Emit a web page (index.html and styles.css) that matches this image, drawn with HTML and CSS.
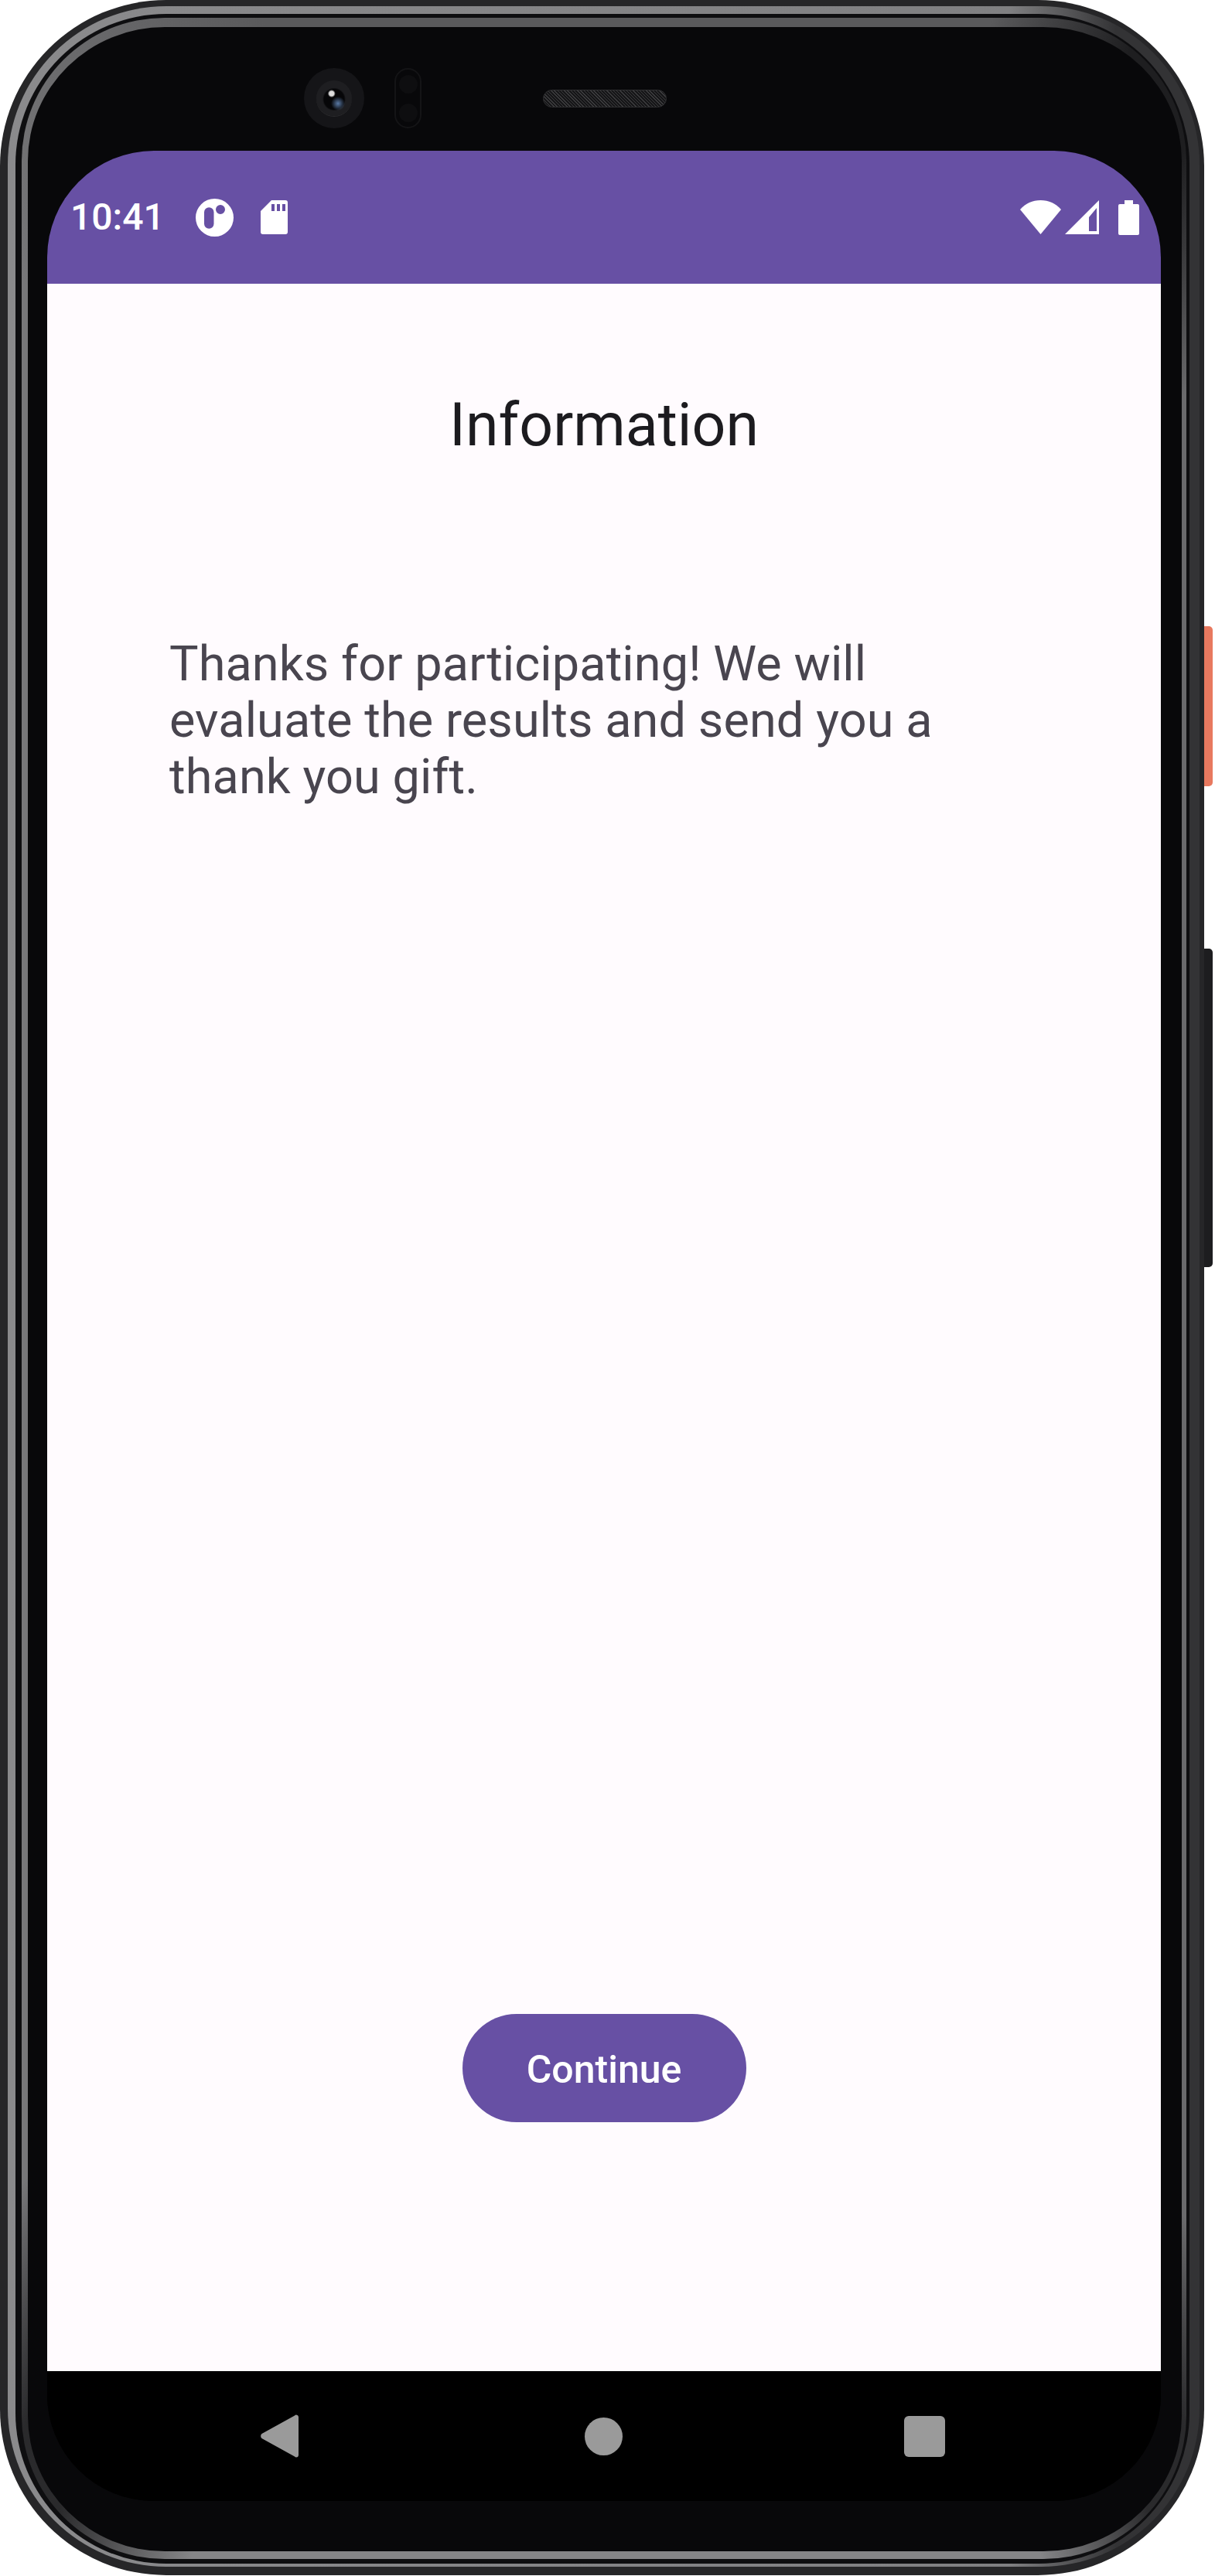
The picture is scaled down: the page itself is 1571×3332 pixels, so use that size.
FILE: index.html
```html
<!DOCTYPE html>
<html lang="en">
<head>
  <meta charset="UTF-8" />
  <meta name="viewport" content="width=device-width, initial-scale=1.0"/>
  <title>Information</title>
  <link rel="stylesheet" href="styles.css">
</head>
<body>
  <div class="phone">
    <span class="side-key power"></span>
    <span class="side-key volume"></span>
    <div class="rim">
      <div class="rim-inner">
        <div class="bezel">
          <div class="top-sensors">
            <div class="camera"><span class="lens"></span></div>
            <div class="prox"><span></span><span></span></div>
            <div class="speaker"></div>
          </div>
          <div class="screen">
            <div class="status-bar">
              <span class="clock">10:41</span>
              <svg class="icon app-dot" viewBox="0 0 49 49">
                <path fill="#fff" fill-rule="evenodd" d="M24.500 0a24.500 24.500 0 1 0 0 49a24.500 24.500 0 1 0 0-49zM17.250 11.250a6.250 6.250 0 0 1 6.250 6.250v15a6.250 6.250 0 0 1-12.500 0v-15a6.250 6.250 0 0 1 6.250-6.250zM32 8a6 6 0 1 1 0 12a6 6 0 1 1 0-12z"/>
              </svg>
              <svg class="icon sd" viewBox="0 0 35 44">
                <path fill="#fff" fill-rule="evenodd" d="M14 0h18a3 3 0 0 1 3 3v38a3 3 0 0 1-3 3h-29a3 3 0 0 1-3-3v-27zM14 5v9h4v-9zM21 5v9h4v-9zM28 5v9h4v-9z"/>
              </svg>
              <span class="status-gap"></span>
              <svg class="icon wifi" viewBox="0 0 53 44">
                <path fill="#fff" d="M0 12C7 4 16 0 26.500 0S46 4 53 12L26.500 44z"/>
              </svg>
              <svg class="icon signal" viewBox="0 0 44 44">
                <path fill="#fff" fill-rule="evenodd" d="M44 0v44H0zM41 10L31 22v18h10z"/>
              </svg>
              <svg class="icon battery" viewBox="0 0 27 45">
                <path fill="#fff" d="M8 0h11v5h6a2 2 0 0 1 2 2v36a2 2 0 0 1-2 2H2a2 2 0 0 1-2-2V7a2 2 0 0 1 2-2h6z"/>
              </svg>
            </div>

            <main class="content">
              <h1 class="page-title">Information</h1>
              <p class="message">Thanks for participating! We will evaluate the results and send you a thank you gift.</p>
              <button class="continue-btn" type="button">Continue</button>
            </main>

            <div class="nav-bar">
              <svg class="nav-back" viewBox="0 0 49 56">
                <path fill="#9a9a9a" d="M46 0.500a3 3 0 0 1 3 2.500v50a3 3 0 0 1-3 2.500a3 3 0 0 1-2-1L1.500 31a4 4 0 0 1 0-6L44 1.500a3 3 0 0 1 2-1z"/>
              </svg>
              <span class="nav-home"></span>
              <span class="nav-recent"></span>
            </div>
          </div>
        </div>
      </div>
    </div>
  </div>
</body>
</html>
```

FILE: styles.css
```css
body {
  margin: 0;
  background: #fff;
  font-family: Roboto, "Liberation Sans", sans-serif;
}

/* phone frame: nested rings around the screen */
.phone {
  position: relative;
  width: 1557px;
  height: 3331px;
  box-sizing: border-box;
  padding: 8px 6px 11px 10px;
  background: #262628;
  border-radius: 215px;
}
.rim {
  height: 100%;
  box-sizing: border-box;
  padding: 10px 13px 4px 10px;
  background: linear-gradient(90deg, #8a8a8c, #808082 84%, #333335 93%);
  border-radius: 205px;
}
.rim-inner {
  height: 100%;
  box-sizing: border-box;
  padding: 5px 4px 6px 8px;
  background: #0e0e10;
  border-radius: 195px;
}
/* the glossy edge dims at the corners, so it is a conic gradient under the border */
.bezel {
  height: 100%;
  box-sizing: border-box;
  padding: 0 24px 65px 25px;
  border: solid transparent;
  border-width: 12px 6px 10px 8px;
  border-radius: 185px;
  background:
    linear-gradient(#08080a, #08080a) padding-box,
    conic-gradient(#5a5a5c 0deg, #5a5a5c 17deg, #1e1e20 23deg, #1e1e20 27deg, #6a6a6c 33deg,
      #6a6a6c 148deg, #2a2a2c 153deg, #2a2a2c 156deg, #858587 161deg,
      #858587 198deg, #2a2a2c 204deg, #2a2a2c 207deg, #777779 213deg,
      #777779 330deg, #5a5a5c 345deg) border-box;
}

/* side keys */
.side-key {
  position: absolute;
  right: -11px;
  width: 11px;
  border-radius: 0 5px 5px 0;
}
.power {
  top: 810px;
  height: 207px;
  background: #e8795f;
}
.volume {
  top: 1227px;
  height: 412px;
  background: #1d1d1f;
}

/* camera and earpiece */
.top-sensors {
  display: flex;
  align-items: center;
  box-sizing: border-box;
  height: 160px;
  padding: 24px 0 0 332px;
}
.camera {
  display: flex;
  align-items: center;
  justify-content: center;
  width: 78px;
  height: 78px;
  border-radius: 50%;
  background: #151518;
}
.lens {
  width: 46px;
  height: 46px;
  border-radius: 50%;
  background:
    radial-gradient(circle at 43% 37%, #ddd 0, #ddd 3px, transparent 5px),
    radial-gradient(circle at 61% 65%, #5a7aa5 0, transparent 9px),
    radial-gradient(circle at 50% 53%, #060608 0, #060608 13px, #1e1e21 15px);
  box-shadow: 0 1px 0 #2c2c2e;
}
.prox {
  display: flex;
  flex-direction: column;
  justify-content: space-around;
  align-items: center;
  box-sizing: border-box;
  width: 35px;
  height: 78px;
  margin-left: 39px;
  border: 2px solid #141416;
  border-radius: 18px;
}
.prox span {
  width: 24px;
  height: 24px;
  border-radius: 50%;
  background: #0e0e10;
}
.speaker {
  box-sizing: border-box;
  width: 160px;
  height: 23px;
  margin-left: 157px;
  border: 1px solid #303032;
  border-radius: 12px;
  background: repeating-linear-gradient(45deg, #3c3c3e 0 1px, #161618 1px 3px);
}

/* screen */
.screen {
  display: flex;
  flex-direction: column;
  width: 1440px;
  height: 3040px;
  border-radius: 138px;
  overflow: hidden;
  background: #000;
}
.status-bar {
  display: flex;
  align-items: center;
  flex: none;
  height: 172px;
  box-sizing: border-box;
  padding: 0 28px 0 30px;
  background: #6750a4;
}
.clock {
  width: 116px;
  margin-right: 46px;
  color: #fff;
  font-size: 48px;
  font-weight: 500;
  line-height: 1;
}
.icon {
  display: block;
  flex: none;
}
.app-dot {
  width: 49px;
  height: 49px;
  margin-right: 35px;
}
.sd {
  width: 35px;
  height: 44px;
}
.status-gap {
  flex: 1;
}
.wifi {
  width: 53px;
  height: 44px;
  margin-right: 5px;
}
.signal {
  width: 44px;
  height: 44px;
  margin-right: 25px;
}
.battery {
  width: 27px;
  height: 45px;
}

.content {
  display: flex;
  flex-direction: column;
  flex: 1;
  box-sizing: border-box;
  padding: 0 158px 322px;
  background: #fffbfe;
}
.page-title {
  margin: 133px 0 0;
  color: #1c1b1f;
  font-size: 77px;
  font-weight: 400;
  line-height: 100px;
  text-align: center;
}
.message {
  margin: 222px 0 0;
  color: #49454f;
  font-size: 63px;
  line-height: 73px;
  letter-spacing: 0.1px;
}
.continue-btn {
  align-self: center;
  width: 367px;
  height: 140px;
  margin-top: auto;
  padding: 4px 0 0;
  border: none;
  border-radius: 70px;
  background: #6750a4;
  color: #fff;
  font-family: inherit;
  font-size: 50px;
  font-weight: 500;
}

.nav-bar {
  display: flex;
  align-items: center;
  flex: none;
  height: 168px;
  padding: 0 0 0 276px;
  background: #000;
}
.nav-back {
  width: 49px;
  height: 56px;
  margin-right: 370px;
}
.nav-home {
  width: 49px;
  height: 49px;
  margin-right: 364px;
  border-radius: 50%;
  background: #9a9a9a;
}
.nav-recent {
  width: 53px;
  height: 53px;
  border-radius: 6px;
  background: #9a9a9a;
}
```
